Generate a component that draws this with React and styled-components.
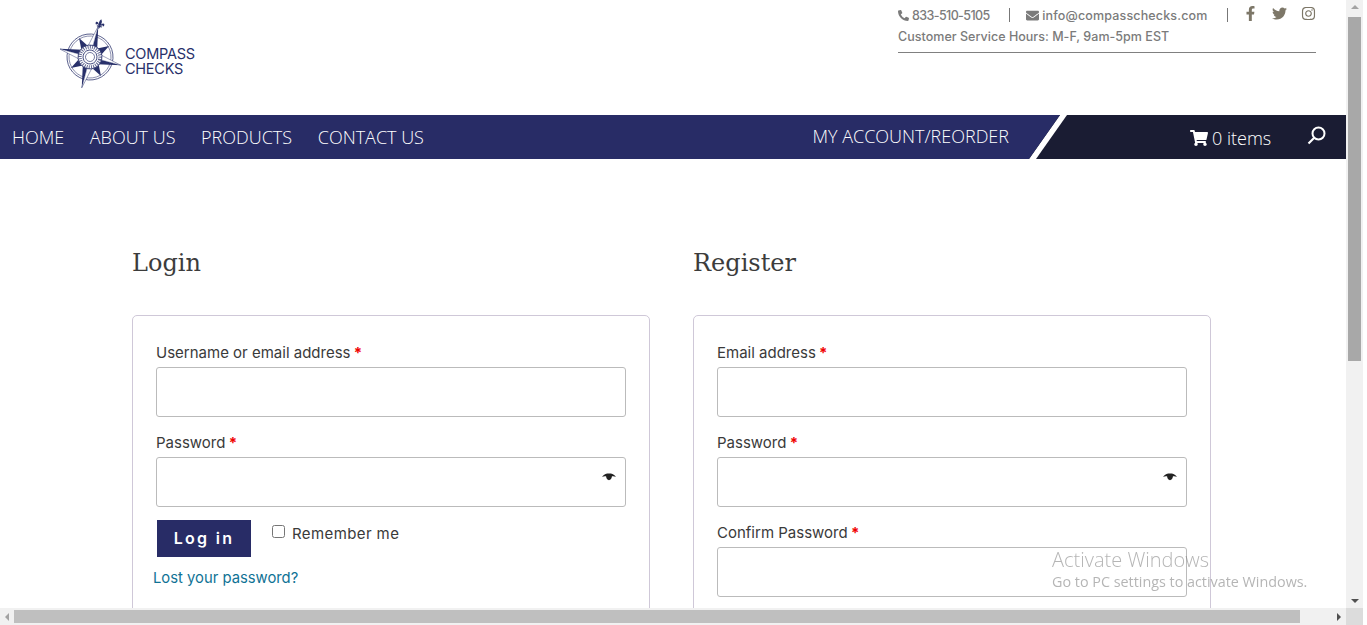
import React from "react";
import styled, { createGlobalStyle } from "styled-components";
import { FaPhoneAlt, FaEnvelope, FaFacebookF, FaTwitter, FaInstagram, FaShoppingCart } from "react-icons/fa";

const GlobalStyle = createGlobalStyle`
  html, body { margin: 0; padding: 0; height: 100%; overflow: hidden; background: #fff; }
  * { box-sizing: border-box; }
`;

const bodyFont = `"Inter", "Liberation Sans", sans-serif`;
const navFont = `"Open Sans", "Liberation Sans", sans-serif`;

const Page = styled.div`
  width: 1346px;
  height: 608px;
  overflow: hidden;
  background: #fff;
  font-family: ${bodyFont};
`;

const Header = styled.header`
  height: 115px;
  display: flex;
  justify-content: space-between;
  padding: 0 30px 0 60px;
`;

const Logo = styled.div`
  display: flex;
  align-items: flex-start;
  padding-top: 17px;
`;

const LogoText = styled.div`
  margin: 29px 0 0 -1px;
  font-size: 14.5px;
  line-height: 15px;
  color: #28306a;
  letter-spacing: -0.25px;
`;

const Contact = styled.div`
  width: 418px;
  height: 48px;
  margin-top: 5px;
  border-bottom: 1px solid #808080;
  color: #7b7b7b;
  font-size: 12.5px;
  font-weight: 500;
`;

const ContactRow = styled.div`
  display: flex;
  align-items: center;
  height: 20px;
`;

const ContactItem = styled.span`
  display: flex;
  align-items: center;
  gap: 3px;
  width: ${(p) => p.$w}px;
  letter-spacing: ${(p) => p.$spacing || 0}px;
  svg { font-size: ${(p) => p.$icon || 11}px; }
`;

const Sep = styled.span`
  width: 1px;
  height: 14px;
  background: #777;
  margin-right: 16px;
`;

const Socials = styled.span`
  display: flex;
  align-items: center;
  margin-left: -1px;
  gap: 14px;
  color: #7d7768;
  font-size: 15px;
  margin-top: -3px;
`;

const Hours = styled.div`
  margin-top: 3px;
  line-height: 18px;
  letter-spacing: 0.03px;
`;

const NavBar = styled.nav`
  height: 44px;
  background: #282c66;
  display: flex;
  align-items: center;
  padding-left: 12px;
  font-family: ${navFont};
  font-weight: 300;
  font-size: 18px;
  color: #fff;
`;

const NavLink = styled.a`
  margin-right: 25.6px;
  white-space: nowrap;
`;

const AccountLink = styled(NavLink)`
  margin-left: auto;
  margin-right: 20px;
  margin-top: -3px;
`;

const CartPanel = styled.div`
  position: relative;
  width: 317px;
  height: 100%;
  background: #1a1c33;
  clip-path: polygon(31px 0, 100% 0, 100% 100%, 0 100%);
  display: flex;
  align-items: center;
  padding-left: 161px;
  &::before {
    content: "";
    position: absolute;
    left: 0;
    top: 0;
    width: 38px;
    height: 100%;
    background: #fff;
    clip-path: polygon(31px 0, 38px 0, 7px 100%, 0 100%);
  }
`;

const CartLabel = styled.span`
  display: flex;
  align-items: center;
  gap: 4px;
  width: 117px;
  font-weight: 300;
  margin-top: 1px;
`;

const SearchIcon = styled.svg`
  width: 19px;
  height: 19px;
  margin-top: -4px;
`;

const Main = styled.main`
  display: grid;
  grid-template-columns: 518px 518px;
  gap: 43px;
  padding: 84px 0 0 132px;
`;

const Title = styled.h2`
  margin: 0 0 32px;
  height: 40px;
  font-family: "DejaVu Serif", "Liberation Serif", serif;
  font-weight: 400;
  font-size: 24px;
  line-height: 40px;
  color: #3c3c3c;
`;

const Card = styled.div`
  border: 1px solid #cfc8d8;
  border-radius: 5px;
  padding: 24px 23px 40px;
  height: 500px;
`;

const Field = styled.div`
  margin-bottom: 13px;
`;

const Label = styled.label`
  display: block;
  font-size: 15px;
  line-height: 26px;
  color: #3a3a3a;
  height: 27px;
`;

const Req = styled.span`
  color: #f00000;
  font-weight: 700;
  margin-left: -1px;
`;

const InputWrap = styled.div`
  position: relative;
  height: 50px;
`;

const Input = styled.input`
  display: block;
  width: 100%;
  height: 100%;
  border: 1px solid #bbb;
  border-radius: 3px;
  background: #fff;
  outline: none;
`;

const Eye = styled.svg`
  position: absolute;
  right: 10px;
  top: 16px;
  width: 14px;
  height: 9px;
`;

const LoginRow = styled.div`
  display: flex;
  align-items: flex-start;
  padding-left: 1px;
`;

const LoginButton = styled.button`
  width: 94px;
  height: 37px;
  border: 0;
  padding: 0 0 2px;
  background: #282c66;
  color: #fff;
  font-family: ${bodyFont};
  font-weight: 600;
  font-size: 16px;
  letter-spacing: 2.3px;
`;

const Remember = styled.label`
  display: flex;
  align-items: center;
  margin-left: 21px;
  height: 26px;
  font-size: 15px;
  letter-spacing: 0.4px;
  color: #3a3a3a;
`;

const Check = styled.input`
  width: 13px;
  height: 13px;
  margin: 0 7px 3px 0;
`;

const LostLink = styled.a`
  display: block;
  margin: 10px 0 0 -3px;
  font-size: 14.8px;
  line-height: 22px;
  color: #0f7295;
`;

const Watermark = styled.div`
  position: fixed;
  left: 1052px;
  top: 546px;
  font-family: ${navFont};
  font-weight: 300;
  color: rgba(120, 120, 120, 0.55);
  pointer-events: none;
`;

const WatermarkTitle = styled.div`
  font-size: 20px;
  line-height: 27px;
`;

const WatermarkText = styled.div`
  font-size: 14.35px;
  line-height: 18px;
  font-weight: 400;
`;

const VBar = styled.div`
  position: fixed;
  left: 1346px;
  top: 0;
  width: 17px;
  height: 608px;
  background: #f1f1f1;
  display: flex;
  flex-direction: column;
  align-items: center;
  justify-content: space-between;
`;

const VThumb = styled.div`
  position: absolute;
  left: 2px;
  top: 17px;
  width: 13px;
  height: 344px;
  background: #a8a8a8;
`;

const HBar = styled.div`
  position: fixed;
  left: 0;
  top: 608px;
  width: 1346px;
  height: 17px;
  background: #f1f1f1;
  display: flex;
  align-items: center;
  justify-content: space-between;
`;

const HThumb = styled.div`
  position: absolute;
  left: 14px;
  top: 2px;
  width: 1286px;
  height: 13px;
  background: #bfbfbf;
`;

const Corner = styled.div`
  position: fixed;
  left: 1346px;
  top: 608px;
  width: 17px;
  height: 17px;
  background: #dcdcdc;
`;

const Arrow = styled.span`
  width: 0;
  height: 0;
  margin: 5px;
  border: 4px solid transparent;
  ${(p) => p.$dir === "up" && "border-bottom-color: #a3a3a3; border-top-width: 0;"}
  ${(p) => p.$dir === "down" && "border-top-color: #505050; border-bottom-width: 0;"}
  ${(p) => p.$dir === "left" && "border-right-color: #a3a3a3; border-left-width: 0;"}
  ${(p) => p.$dir === "right" && "border-left-color: #505050; border-right-width: 0;"}
`;

// rotated compass star, points drawn around 0,0
const CompassMark = () => {
  const navy = "#28306a";
  const big = [0, 90, 180, 270];
  const small = [45, 135, 225, 315];
  return (
    <svg width="66" height="76" viewBox="0 0 66 76">
      <g transform="translate(30 40) rotate(15)">
        <circle r="23" fill="none" stroke={navy} strokeWidth="0.7" />
        <circle r="21" fill="none" stroke={navy} strokeWidth="0.5" />
        {small.map((a) => (
          <path key={a} transform={`rotate(${a})`} d="M0-22L5-7H-5Z" fill={navy} />
        ))}
        {big.map((a) => (
          <g key={a} transform={`rotate(${a})`}>
            <path d="M0-32L5-9L0-9Z" fill={navy} />
            <path d="M0-32L-5-9L0-9Z" fill="#fff" stroke={navy} strokeWidth="0.4" />
          </g>
        ))}
        <circle r="12" fill="#fff" stroke={navy} strokeWidth="0.8" />
        <circle r="10" fill="none" stroke={navy} strokeWidth="3.5" strokeDasharray="1 1.2" opacity="0.75" />
        <circle r="7" fill="#fff" stroke={navy} strokeWidth="0.8" />
        <circle r="4.5" fill="none" stroke={navy} strokeWidth="0.6" />
      </g>
      <g transform="translate(40 7) rotate(15)" fill={navy}>
        <path d="M0-5C1.8-3 1.5-1 .8 2H-.8C-1.5-1-1.8-3 0-5Z" />
        <path d="M.8 2C1-1.5 5-2.5 4.4 .6C4 2 2.6 1.6 3 .6C2 .6 1.6 1.2 1.6 2Z" />
        <path d="M-.8 2C-1-1.5-5-2.5-4.4 .6C-4 2-2.6 1.6-3 .6C-2 .6-1.6 1.2-1.6 2Z" />
        <path d="M-2.6 2H2.6V2.9H-2.6ZM-.9 2.9H.9L0 5.4Z" />
      </g>
    </svg>
  );
};

const EyeIcon = () => (
  <Eye viewBox="0 0 16 10">
    <path d="M0 4C3 1 5 .5 8 .5S13 1 16 4C13 3.6 12 3.6 11.4 3.6C11 6.5 9.5 8 8 8S5 6.5 4.6 3.6C4 3.6 3 3.6 0 4Z" fill="#222" />
  </Eye>
);

const TextField = ({ label, eye }) => (
  <Field>
    <Label>{label} <Req>*</Req></Label>
    <InputWrap>
      <Input type="text" />
      {eye && <EyeIcon />}
    </InputWrap>
  </Field>
);

export default function App() {
  return (
    <>
      <GlobalStyle />
      <Page>
        <Header>
          <Logo>
            <CompassMark />
            <LogoText>COMPASS<br />CHECKS</LogoText>
          </Logo>
          <Contact>
            <ContactRow>
              <ContactItem $w={112} $spacing={-0.6}><FaPhoneAlt />833-510-5105</ContactItem>
              <Sep />
              <ContactItem $w={202} $icon={13} $spacing={0.15}><FaEnvelope />info@compasschecks.com</ContactItem>
              <Sep />
              <Socials>
                <FaFacebookF />
                <FaTwitter />
                <FaInstagram />
              </Socials>
            </ContactRow>
            <Hours>Customer Service Hours: M-F, 9am-5pm EST</Hours>
          </Contact>
        </Header>
        <NavBar>
          <NavLink>HOME</NavLink>
          <NavLink>ABOUT US</NavLink>
          <NavLink>PRODUCTS</NavLink>
          <NavLink>CONTACT US</NavLink>
          <AccountLink>MY ACCOUNT/REORDER</AccountLink>
          <CartPanel>
            <CartLabel><FaShoppingCart />0 items</CartLabel>
            <SearchIcon viewBox="0 0 19 19" fill="none" stroke="#fff">
              <circle cx="11.5" cy="7.5" r="6" strokeWidth="2" />
              <path d="M7 12L1.5 17.5" strokeWidth="2.2" />
            </SearchIcon>
          </CartPanel>
        </NavBar>
        <Main>
          <section>
            <Title>Login</Title>
            <Card>
              <TextField label="Username or email address" />
              <TextField label="Password" eye />
              <LoginRow>
                <LoginButton>Log in</LoginButton>
                <Remember><Check type="checkbox" />Remember me</Remember>
              </LoginRow>
              <LostLink>Lost your password?</LostLink>
            </Card>
          </section>
          <section>
            <Title>Register</Title>
            <Card>
              <TextField label="Email address" />
              <TextField label="Password" eye />
              <TextField label="Confirm Password" />
            </Card>
          </section>
        </Main>
      </Page>
      <Watermark>
        <WatermarkTitle>Activate Windows</WatermarkTitle>
        <WatermarkText>Go to PC settings to activate Windows.</WatermarkText>
      </Watermark>
      <VBar>
        <Arrow $dir="up" />
        <VThumb />
        <Arrow $dir="down" />
      </VBar>
      <HBar>
        <Arrow $dir="left" />
        <HThumb />
        <Arrow $dir="right" />
      </HBar>
      <Corner />
    </>
  );
}
